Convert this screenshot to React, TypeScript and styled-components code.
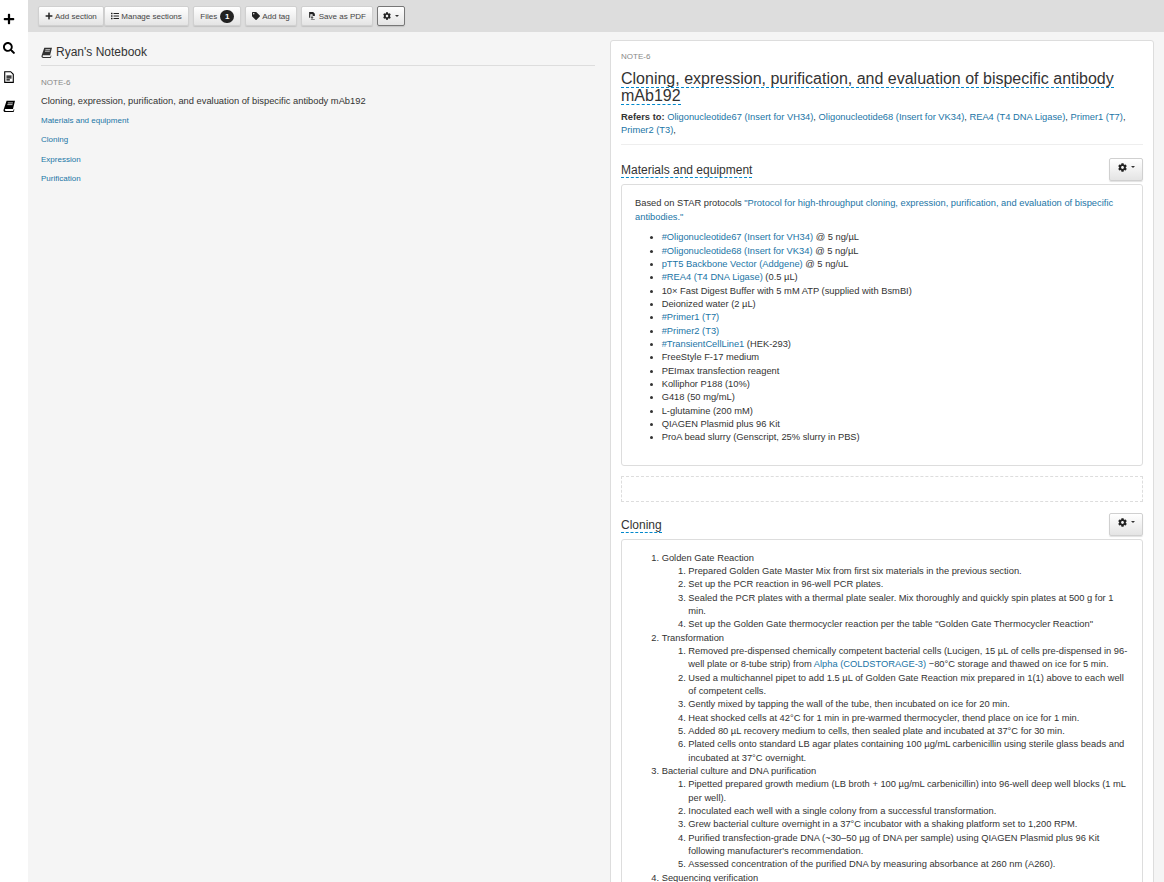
import React from "react";
import styled, { createGlobalStyle } from "styled-components";
import { FaPlus, FaSearch, FaCog, FaTag, FaList } from "react-icons/fa";

const GlobalStyle = createGlobalStyle`
  html, body {
    margin: 0;
    padding: 0;
    height: 882px;
    overflow: hidden;
    background: #f5f5f5;
    font-family: "Liberation Sans", Arial, sans-serif;
    font-size: 9.33px;
    line-height: 13.33px;
    color: #333;
  }
  a {
    color: #1b75a6;
    text-decoration: none;
  }
`;

const Layout = styled.div`
  display: flex;
  height: 882px;
  overflow: hidden;
`;

const Sidebar = styled.nav`
  width: 28px;
  flex: none;
  background: #fff;
  display: flex;
  flex-direction: column;
  align-items: flex-start;
  padding: 13px 0 0 3px;
  gap: 17px;
  color: #000;
  box-sizing: border-box;
  svg {
    display: block;
    width: 12px;
    height: 12px;
  }
`;

const Main = styled.div`
  flex: 1;
  min-width: 0;
  display: flex;
  flex-direction: column;
`;

const Toolbar = styled.div`
  height: 32px;
  flex: none;
  background: #dddddd;
  display: flex;
  align-items: flex-start;
  padding: 6px 0 0 10px;
  gap: 4px;
  box-sizing: border-box;
`;

const BtnGroup = styled.div`
  display: flex;
`;

const Btn = styled.button<{ $dark?: boolean }>`
  height: 20px;
  padding: 0 6px;
  display: inline-flex;
  align-items: center;
  gap: 2px;
  font-family: inherit;
  font-size: 8px;
  color: #444;
  border: 1px solid ${(p) => (p.$dark ? "#777" : "#d0d0d0")};
  border-radius: 2px;
  background: linear-gradient(to bottom, #ffffff, #e4e4e4);
  box-shadow: 0 1px 1px rgba(0, 0, 0, 0.12);
  white-space: nowrap;
  svg {
    width: 8px;
    height: 8px;
    color: #222;
  }
`;

const ManageBtn = styled(Btn)`
  padding: 0 6.5px;
`;

const PdfBtn = styled(Btn)`
  gap: 3px;
`;

const GearBtn = styled(Btn)`
  padding: 0 5px;
`;

const Badge = styled.span`
  display: inline-block;
  min-width: 14px;
  height: 13px;
  line-height: 13px;
  border-radius: 7px;
  background: #222;
  color: #fff;
  font-size: 8px;
  font-weight: bold;
  text-align: center;
  margin-left: 1px;
`;

const Caret = styled.span`
  display: inline-block;
  width: 0;
  height: 0;
  margin-left: 2px;
  border-top: 2.5px solid #333;
  border-left: 2.5px solid transparent;
  border-right: 2.5px solid transparent;
`;

const Body = styled.div`
  flex: 1;
  display: flex;
  min-height: 0;
`;

const NotebookColumn = styled.aside`
  width: 582px;
  flex: none;
  padding: 13px 15px 0 13px;
  box-sizing: border-box;
`;

const NotebookTitle = styled.h4`
  margin: 0;
  padding-bottom: 6px;
  height: 21px;
  box-sizing: border-box;
  border-bottom: 1px solid #ddd;
  font-size: 12px;
  line-height: 15px;
  font-weight: 500;
  display: flex;
  align-items: center;
  gap: 4px;
  svg {
    width: 11px;
    height: 11px;
  }
`;

const NoteId = styled.div`
  font-size: 8px;
  line-height: 11px;
  color: #888;
`;

const NotebookNoteId = styled(NoteId)`
  margin-top: 11px;
`;

const NotebookNote = styled.div`
  margin-top: 5.5px;
  line-height: 14px;
`;

const TocLink = styled.a`
  display: block;
  font-size: 8px;
  line-height: 11px;
  margin-top: 8.3px;
  &:first-of-type {
    margin-top: 7.5px;
  }
`;

const NotePanel = styled.main`
  width: 544px;
  margin-top: 8px;
  flex: none;
  background: #fff;
  border: 1px solid #ddd;
  border-radius: 3px;
  padding: 10px 10px 0;
  box-sizing: border-box;
  height: 900px;
  overflow: hidden;
`;

const NoteTitle = styled.h3`
  margin: 8px 0 0;
  font-size: 16px;
  line-height: 17px;
  font-weight: 500;
`;

const Editable = styled.span`
  border-bottom: 1px dashed #0088cc;
`;

const RefersTo = styled.p`
  margin: 7px 0 12px;
  padding-bottom: 6px;
  border-bottom: 1px solid #eee;
  b {
    font-weight: bold;
  }
`;

const SectionHeader = styled.div`
  display: flex;
  justify-content: space-between;
  align-items: flex-end;
  height: 24px;
`;

const SectionTitle = styled.h4`
  margin: 0 0 4px;
  font-size: 12px;
  line-height: 14px;
  font-weight: 500;
`;

const SectionBtn = styled(Btn)`
  height: 23px;
  padding: 0 7.5px 4px;
  align-items: center;
  svg {
    width: 9px;
    height: 9px;
  }
`;

const ContentBox = styled.section`
  margin-top: 3px;
  border: 1px solid #ddd;
  border-radius: 3px;
  padding: 12px 13px 0;
`;

const MaterialsBox = styled(ContentBox)`
  height: 282px;
  padding-top: 11px;
  box-sizing: border-box;
`;

const Lead = styled.p`
  margin: 0 0 7.67px;
  line-height: 14px;
`;

const DropZone = styled.div`
  height: 26px;
  margin: 10px 0;
  border: 1px dashed #ddd;
  box-sizing: border-box;
`;

const BulletList = styled.ul`
  margin: 0;
  padding-left: 26.67px;
`;

const NumberList = styled.ol`
  margin: 0;
  padding-left: 26.67px;
`;

function BookIcon() {
  return (
    <svg viewBox="0 0 14 14" fill="currentColor">
      <path d="M4.2 1H14l-2.4 9.6H3.4c-.9 0-1.3.6-1.3 1.1 0 .6.4 1 1.2 1h8.6l.6-1.9.8.3-.9 2.9H2.9C1.2 14 .4 13 .6 11.6z" />
      <path d="M5.6 3.4h6M5.1 5.4h6" stroke="#fff" strokeWidth="0.9" />
    </svg>
  );
}

function NoteIcon() {
  return (
    <svg viewBox="0 0 14 14" fill="none" stroke="currentColor" strokeWidth="1.3">
      <path d="M2 .8h7l3 3v9.5H2z" />
      <path d="M4 6h6M4 8h6M4 10.3h4" />
    </svg>
  );
}

function SaveFileIcon() {
  return (
    <svg viewBox="0 0 14 14" fill="currentColor">
      <path d="M2 0h7l3 3v4H8V4H4v6H2z" />
      <path d="M8 6v3h2L7 12.5 4.5 9H6V6zM5 12.5h7V14H5z" stroke="#fff" strokeWidth="0.5" />
    </svg>
  );
}

function Gear() {
  return (
    <>
      <FaCog />
      <Caret />
    </>
  );
}

// 材料清单
const materials: React.ReactNode[] = [
  <><a href="#">#Oligonucleotide67 (Insert for VH34)</a> @ 5 ng/µL</>,
  <><a href="#">#Oligonucleotide68 (Insert for VK34)</a> @ 5 ng/µL</>,
  <><a href="#">pTT5 Backbone Vector (Addgene)</a> @ 5 ng/uL</>,
  <><a href="#">#REA4 (T4 DNA Ligase)</a> (0.5 µL)</>,
  "10× Fast Digest Buffer with 5 mM ATP (supplied with BsmBI)",
  "Deionized water (2 µL)",
  <a href="#">#Primer1 (T7)</a>,
  <a href="#">#Primer2 (T3)</a>,
  <><a href="#">#TransientCellLine1</a> (HEK-293)</>,
  "FreeStyle F-17 medium",
  "PEImax transfection reagent",
  "Kolliphor P188 (10%)",
  "G418 (50 mg/mL)",
  "L-glutamine (200 mM)",
  "QIAGEN Plasmid plus 96 Kit",
  "ProA bead slurry (Genscript, 25% slurry in PBS)",
];

const protocol: { title: string; steps: React.ReactNode[] }[] = [
  {
    title: "Golden Gate Reaction",
    steps: [
      "Prepared Golden Gate Master Mix from first six materials in the previous section.",
      "Set up the PCR reaction in 96-well PCR plates.",
      "Sealed the PCR plates with a thermal plate sealer. Mix thoroughly and quickly spin plates at 500 g for 1 min.",
      "Set up the Golden Gate thermocycler reaction per the table \"Golden Gate Thermocycler Reaction\"",
    ],
  },
  {
    title: "Transformation",
    steps: [
      <>Removed pre-dispensed chemically competent bacterial cells (Lucigen, 15 µL of cells pre-dispensed in 96-well plate or 8-tube strip) from <a href="#">Alpha (COLDSTORAGE-3)</a> −80°C storage and thawed on ice for 5 min.</>,
      "Used a multichannel pipet to add 1.5 µL of Golden Gate Reaction mix prepared in 1(1) above to each well of competent cells.",
      "Gently mixed by tapping the wall of the tube, then incubated on ice for 20 min.",
      "Heat shocked cells at 42°C for 1 min in pre-warmed thermocycler, thend place on ice for 1 min.",
      "Added 80 µL recovery medium to cells, then sealed plate and incubated at 37°C for 30 min.",
      "Plated cells onto standard LB agar plates containing 100 µg/mL carbenicillin using sterile glass beads and incubated at 37°C overnight.",
    ],
  },
  {
    title: "Bacterial culture and DNA purification",
    steps: [
      "Pipetted prepared growth medium (LB broth + 100 µg/mL carbenicillin) into 96-well deep well blocks (1 mL per well).",
      "Inoculated each well with a single colony from a successful transformation.",
      "Grew bacterial culture overnight in a 37°C incubator with a shaking platform set to 1,200 RPM.",
      "Purified transfection-grade DNA (~30–50 µg of DNA per sample) using QIAGEN Plasmid plus 96 Kit following manufacturer's recommendation.",
      "Assessed concentration of the purified DNA by measuring absorbance at 260 nm (A260).",
    ],
  },
  { title: "Sequencing verification", steps: [] },
];

export default function App() {
  return (
    <>
      <GlobalStyle />
      <Layout>
        <Sidebar>
          <FaPlus />
          <FaSearch />
          <NoteIcon />
          <BookIcon />
        </Sidebar>
        <Main>
          <Toolbar>
            <BtnGroup>
              <Btn><FaPlus /> Add section</Btn>
              <ManageBtn><FaList /> Manage sections</ManageBtn>
            </BtnGroup>
            <Btn>Files <Badge>1</Badge></Btn>
            <Btn><FaTag /> Add tag</Btn>
            <PdfBtn><SaveFileIcon /> Save as PDF</PdfBtn>
            <GearBtn $dark><Gear /></GearBtn>
          </Toolbar>
          <Body>
            <NotebookColumn>
              <NotebookTitle><BookIcon /> Ryan's Notebook</NotebookTitle>
              <NotebookNoteId>NOTE-6</NotebookNoteId>
              <NotebookNote>Cloning, expression, purification, and evaluation of bispecific antibody mAb192</NotebookNote>
              <TocLink href="#">Materials and equipment</TocLink>
              <TocLink href="#">Cloning</TocLink>
              <TocLink href="#">Expression</TocLink>
              <TocLink href="#">Purification</TocLink>
            </NotebookColumn>
            <NotePanel>
              <NoteId>NOTE-6</NoteId>
              <NoteTitle>
                <Editable>Cloning, expression, purification, and evaluation of bispecific antibody mAb192</Editable>
              </NoteTitle>
              <RefersTo>
                <b>Refers to:</b> <a href="#">Oligonucleotide67 (Insert for VH34)</a>, <a href="#">Oligonucleotide68 (Insert for VK34)</a>, <a href="#">REA4 (T4 DNA Ligase)</a>, <a href="#">Primer1 (T7)</a>, <a href="#">Primer2 (T3)</a>,
              </RefersTo>

              <SectionHeader>
                <SectionTitle><Editable>Materials and equipment</Editable></SectionTitle>
                <SectionBtn><Gear /></SectionBtn>
              </SectionHeader>
              <MaterialsBox>
                <Lead>
                  Based on STAR protocols <a href="#">"Protocol for high-throughput cloning, expression, purification, and evaluation of bispecific antibodies."</a>
                </Lead>
                <BulletList>
                  {materials.map((item, i) => (
                    <li key={i}>{item}</li>
                  ))}
                </BulletList>
              </MaterialsBox>
              <DropZone />

              <SectionHeader>
                <SectionTitle><Editable>Cloning</Editable></SectionTitle>
                <SectionBtn><Gear /></SectionBtn>
              </SectionHeader>
              <ContentBox>
                <NumberList>
                  {protocol.map((part) => (
                    <li key={part.title}>
                      {part.title}
                      {part.steps.length > 0 && (
                        <NumberList>
                          {part.steps.map((step, i) => (
                            <li key={i}>{step}</li>
                          ))}
                        </NumberList>
                      )}
                    </li>
                  ))}
                </NumberList>
              </ContentBox>
            </NotePanel>
          </Body>
        </Main>
      </Layout>
    </>
  );
}
